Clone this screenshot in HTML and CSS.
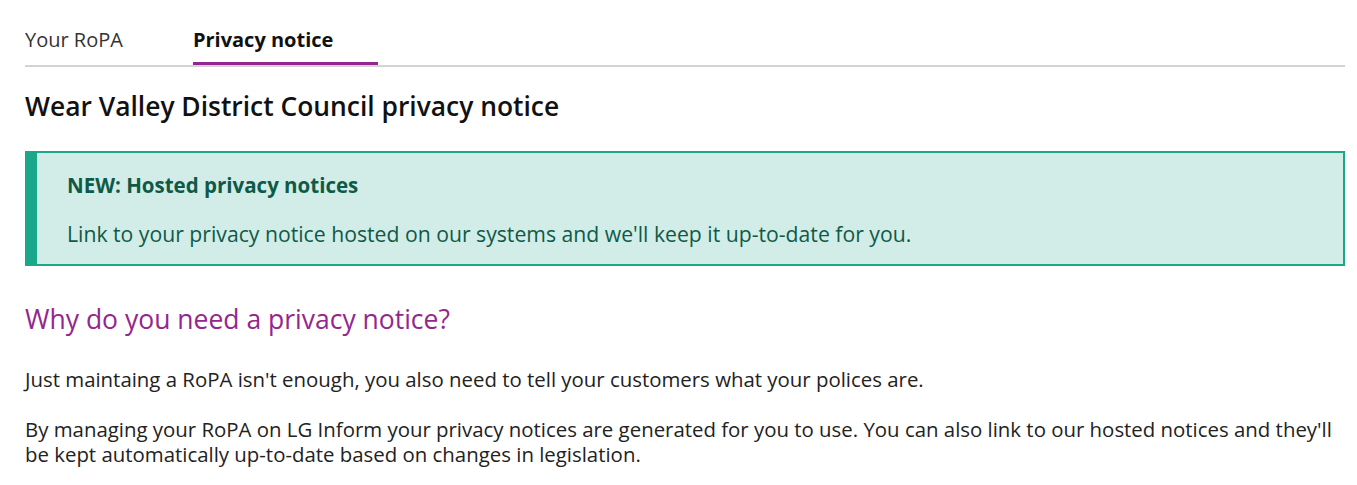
FILE: index.html
```html
<!DOCTYPE html>
<html lang="en">
<head>
<meta charset="utf-8">
<title>Privacy notice</title>
<link rel="stylesheet" href="styles.css">
</head>
<body>
<div class="page">
  <nav class="tabs">
    <a class="tab" href="#">Your RoPA</a>
    <a class="tab tab-active" href="#">Privacy notice</a>
  </nav>
  <h1 class="title">Wear Valley District Council privacy notice</h1>
  <div class="callout">
    <p class="callout-title">NEW: Hosted privacy notices</p>
    <p class="callout-text">Link to your privacy notice hosted on our systems and we'll keep it up-to-date for you.</p>
  </div>
  <h2 class="section-title">Why do you need a privacy notice?</h2>
  <p class="body-text">Just maintaing a RoPA isn't enough, you also need to tell your customers what your polices are.</p>
  <p class="body-text">By managing your RoPA on LG Inform your privacy notices are generated for you to use. You can also link to our hosted notices and they'll be kept automatically up-to-date based on changes in legislation.</p>
</div>
</body>
</html>
```
FILE: styles.css
```css
html, body {
  margin: 0;
  padding: 0;
  background: #ffffff;
}
body {
  font-family: "Open Sans", "Noto Sans", "Liberation Sans", sans-serif;
  color: #222222;
}
.page {
  padding: 0 12px 0 25px;
}
.tabs {
  display: flex;
  gap: 25px;
  padding-top: 27px;
  border-bottom: 2px solid #d3d3d3;
}
.tab {
  display: block;
  font-size: 20px;
  line-height: 26px;
  color: #333333;
  text-decoration: none;
  padding: 0 45px 9px 0;
  border-bottom: 3px solid transparent;
}
.tab-active {
  font-weight: 700;
  color: #111111;
  border-bottom-color: #93278f;
}
.title {
  margin: 23px 0 0;
  font-size: 26.4px;
  line-height: 32px;
  font-weight: 600;
  color: #111111;
}
.callout {
  margin-top: 29px;
  background: #d2ede8;
  border: 2px solid #1ba78a;
  border-left-width: 12px;
  padding: 19px 20px 17px 30px;
  color: #0e5a47;
}
.callout-title {
  margin: 0;
  font-size: 20.5px;
  line-height: 26px;
  font-weight: 700;
}
.callout-text {
  margin: 23px 0 0;
  font-size: 21.2px;
  line-height: 26px;
}
.section-title {
  margin: 37px 0 0;
  font-size: 26.5px;
  line-height: 32px;
  font-weight: 400;
  color: #93278f;
}
.body-text {
  margin: 32px 0 0;
  font-size: 20.4px;
  line-height: 25px;
  color: #222222;
}
.body-text + .body-text {
  margin-top: 25px;
}
```
